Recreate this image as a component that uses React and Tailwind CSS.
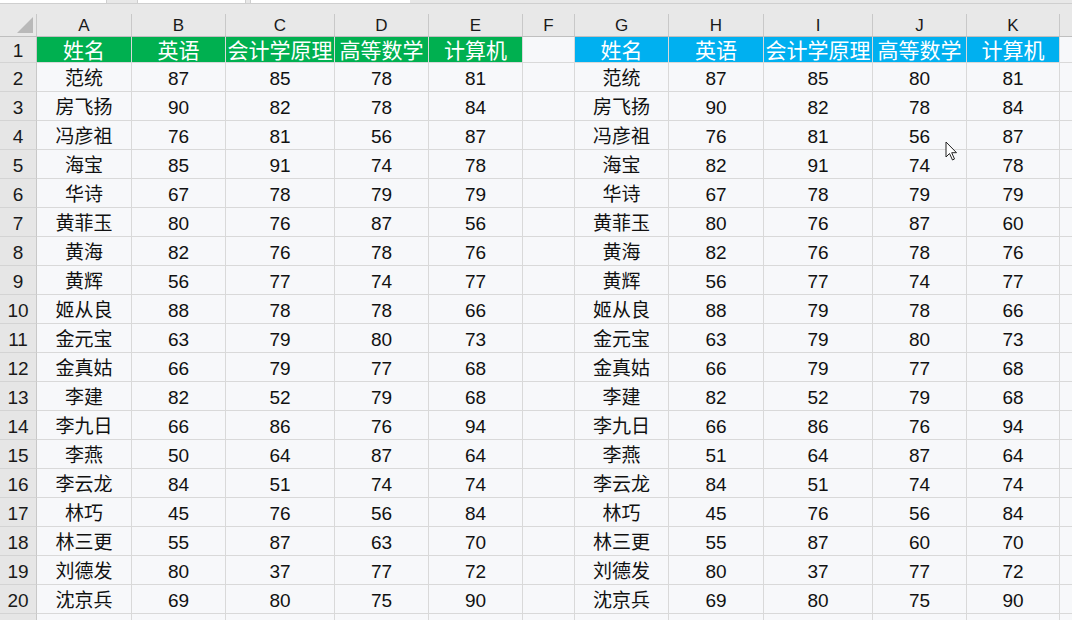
import React from "react";

const cols = [
  { key: "A", w: "w-[95px]" },
  { key: "B", w: "w-[94px]" },
  { key: "C", w: "w-[109px]" },
  { key: "D", w: "w-[94px]" },
  { key: "E", w: "w-[94px]" },
  { key: "F", w: "w-[52px]" },
  { key: "G", w: "w-[94px]" },
  { key: "H", w: "w-[95px]" },
  { key: "I", w: "w-[109px]" },
  { key: "J", w: "w-[94px]" },
  { key: "K", w: "w-[93px]" },
];

const heads = ["姓名", "英语", "会计学原理", "高等数学", "计算机"];

const left = [
  ["范统", 87, 85, 78, 81],
  ["房飞扬", 90, 82, 78, 84],
  ["冯彦祖", 76, 81, 56, 87],
  ["海宝", 85, 91, 74, 78],
  ["华诗", 67, 78, 79, 79],
  ["黄菲玉", 80, 76, 87, 56],
  ["黄海", 82, 76, 78, 76],
  ["黄辉", 56, 77, 74, 77],
  ["姬从良", 88, 78, 78, 66],
  ["金元宝", 63, 79, 80, 73],
  ["金真姑", 66, 79, 77, 68],
  ["李建", 82, 52, 79, 68],
  ["李九日", 66, 86, 76, 94],
  ["李燕", 50, 64, 87, 64],
  ["李云龙", 84, 51, 74, 74],
  ["林巧", 45, 76, 56, 84],
  ["林三更", 55, 87, 63, 70],
  ["刘德发", 80, 37, 77, 72],
  ["沈京兵", 69, 80, 75, 90],
];

const right = [
  ["范统", 87, 85, 80, 81],
  ["房飞扬", 90, 82, 78, 84],
  ["冯彦祖", 76, 81, 56, 87],
  ["海宝", 82, 91, 74, 78],
  ["华诗", 67, 78, 79, 79],
  ["黄菲玉", 80, 76, 87, 60],
  ["黄海", 82, 76, 78, 76],
  ["黄辉", 56, 77, 74, 77],
  ["姬从良", 88, 79, 78, 66],
  ["金元宝", 63, 79, 80, 73],
  ["金真姑", 66, 79, 77, 68],
  ["李建", 82, 52, 79, 68],
  ["李九日", 66, 86, 76, 94],
  ["李燕", 51, 64, 87, 64],
  ["李云龙", 84, 51, 74, 74],
  ["林巧", 45, 76, 56, 84],
  ["林三更", 55, 87, 60, 70],
  ["刘德发", 80, 37, 77, 72],
  ["沈京兵", 69, 80, 75, 90],
];

function RowHead({ n, h }) {
  return (
    <div
      className={`w-[37px] shrink-0 ${h} bg-[#e6e6e6] border-r border-b border-r-[#c8c8c8] border-b-[#d4d4d4] flex items-center justify-center pt-1 text-[19px] text-[#1a1a1a]`}
    >
      {n}
    </div>
  );
}

function Cell({ w, children, cls = "" }) {
  return (
    <div
      className={`${w} shrink-0 h-full border-r border-b border-[#d9d9d9] flex items-center justify-center ${cls}`}
    >
      {children}
    </div>
  );
}

export default function App() {
  const rows = left.map((r, i) => [...r, "", ...right[i]]);

  return (
    <div className="relative w-[1072px] h-[620px] overflow-hidden bg-[#f7f8fa] font-['Liberation_Sans','Noto_Sans_CJK_SC',sans-serif] text-[#111]">
      {/* toolbar remnants */}
      <div className="h-[4px] bg-[#e8e8e8] border-b border-[#cfcfcf] flex gap-[31px]">
        <div className="w-[107px] h-[3px] bg-white border-r border-[#cfcfcf]" />
        <div className="w-[109px] h-[3px] bg-white border-x border-[#cfcfcf] -ml-px" />
        <div className="w-[160px] h-[3px] bg-white border-l border-[#cfcfcf] -ml-[27px]" />
      </div>
      <div className="h-[10px] bg-[#e8e8e8]" />

      {/* column header */}
      <div className="flex h-[23px] bg-[#e8e8e8] border-b border-[#bfbfbf]">
        <div className="w-[37px] shrink-0 h-full border-r border-[#c8c8c8] flex items-end justify-end pr-[3px] pb-[3px]">
          <svg width="16" height="16" viewBox="0 0 16 16">
            <polygon points="16,0 16,16 0,16" fill="#b9b9b9" />
          </svg>
        </div>
        {cols.map((c) => (
          <div
            key={c.key}
            className={`${c.w} shrink-0 h-full border-r border-[#c8c8c8] flex items-center justify-center pt-[2px] text-[17px] text-[#1a1a1a]`}
          >
            {c.key}
          </div>
        ))}
        <div className="flex-1" />
      </div>

      {/* row 1 */}
      <div className="flex h-[26px]">
        <RowHead n={1} h="h-[26px]" />
        {cols.map((c, i) => {
          if (i < 5)
            return (
              <Cell key={c.key} w={c.w} cls="bg-[#00b050] border-[#00b050] text-white text-[21px] pt-[2px]">
                {heads[i]}
              </Cell>
            );
          if (i === 5) return <Cell key={c.key} w={c.w} />;
          return (
            <Cell key={c.key} w={c.w} cls="bg-[#00b0f0] border-[#00b0f0] text-white text-[21px] pt-[2px]">
              {heads[i - 6]}
            </Cell>
          );
        })}
        <div className="flex-1 border-b border-[#d9d9d9]" />
      </div>

      {/* data rows */}
      {rows.map((r, ri) => (
        <div key={ri} className="flex h-[29px]">
          <RowHead n={ri + 2} h="h-[29px]" />
          {cols.map((c, ci) => (
            <Cell key={c.key} w={c.w} cls="text-[19px] pt-[4px]">
              {r[ci]}
            </Cell>
          ))}
          <div className="flex-1 border-b border-[#d9d9d9]" />
        </div>
      ))}

      {/* partial row 21 */}
      <div className="flex h-[29px]">
        <RowHead n="" h="h-[29px]" />
        {cols.map((c) => (
          <Cell key={c.key} w={c.w} />
        ))}
      </div>

      {/* mouse cursor */}
      <svg
        className="absolute left-[945px] top-[141px]"
        width="14"
        height="21"
        viewBox="0 0 14 21"
      >
        <path
          d="M1 1 L1 16 L4.5 12.5 L7.5 19 L9.5 18 L6.7 11.7 L11.5 11.7 Z"
          fill="#ffffff"
          stroke="#222"
          strokeWidth="1"
          strokeLinejoin="round"
        />
      </svg>
    </div>
  );
}
